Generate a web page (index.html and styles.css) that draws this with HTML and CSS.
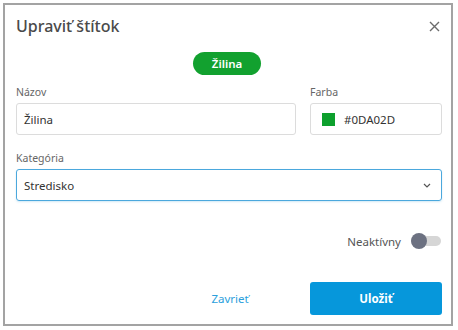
FILE: index.html
```html
<!DOCTYPE html>
<html lang="sk">
<head>
  <meta charset="UTF-8" />
  <title>Upraviť štítok</title>
  <link rel="stylesheet" href="styles.css">
</head>
<body>
  <div class="dialog">
    <div class="dialog-head">
      <h1>Upraviť štítok</h1>
      <button class="close" aria-label="Zavrieť">
        <svg width="11" height="11" viewBox="0 0 11 11"><path d="M1 1 L10 10 M10 1 L1 10" stroke="#6b6b6b" stroke-width="1.4" fill="none"/></svg>
      </button>
    </div>

    <div class="preview">
      <span class="tag">Žilina</span>
    </div>

    <div class="row">
      <div class="field">
        <label>Názov</label>
        <div class="input">Žilina</div>
      </div>
      <div class="field">
        <label>Farba</label>
        <div class="input"><span class="swatch"></span>#0DA02D</div>
      </div>
    </div>

    <div class="field field-cat">
      <label>Kategória</label>
      <div class="input select">
        Stredisko
        <svg width="8" height="5" viewBox="0 0 8 5"><path d="M1 1 L4 4 L7 1" stroke="#555" stroke-width="1.2" fill="none"/></svg>
      </div>
    </div>

    <div class="toggle-row">
      <span>Neaktívny</span>
      <span class="toggle"><span class="knob"></span></span>
    </div>

    <div class="actions">
      <button class="link">Zavrieť</button>
      <button class="primary">Uložiť</button>
    </div>
  </div>
</body>
</html>
```

FILE: styles.css
```css
body {
  margin: 0;
  background: #fff;
  font-family: "Noto Sans", "Open Sans", sans-serif;
  color: #333;
}

.dialog {
  margin: 3px;
  width: 426px;
  height: 319px;
  border: 2px solid #a3a3a3;
  padding: 0 9px 0 11px;
  box-sizing: content-box;
  display: flex;
  flex-direction: column;
}

.dialog-head {
  display: flex;
  justify-content: space-between;
  align-items: center;
  padding-top: 9px;
  height: 24px;
}

h1 {
  margin: 0;
  font-size: 16px;
  font-weight: 500;
  color: #4a4a4a;
  line-height: 24px;
}

.close {
  border: none;
  background: none;
  padding: 0;
  margin-right: 2px;
  width: 11px;
  height: 11px;
  display: flex;
}

.preview {
  display: flex;
  justify-content: center;
  margin-top: 14px;
}

.tag {
  background: #12a12f;
  color: #fff;
  font-size: 11.5px;
  font-weight: 600;
  height: 23px;
  line-height: 23px;
  width: 68px;
  margin-left: -4px;
  text-align: center;
  border-radius: 12px;
}

.row {
  display: grid;
  grid-template-columns: 1fr 132px;
  gap: 14px;
  margin-top: 10px;
}

.field label {
  display: block;
  font-size: 10.5px;
  line-height: 14px;
  color: #666;
  margin-bottom: 4px;
}

.input {
  height: 32px;
  box-sizing: border-box;
  border: 1px solid #dcdcdc;
  border-radius: 3px;
  display: flex;
  align-items: center;
  padding: 0 7px;
  font-size: 11.5px;
  color: #333;
}

.swatch {
  width: 13px;
  height: 13px;
  background: #0da02d;
  margin: 0 9px 0 4px;
}

.field-cat {
  margin-top: 16px;
}

.select {
  border-color: #4ba8dd;
  justify-content: space-between;
  padding-right: 10px;
  box-shadow: 0 1px 2px rgba(75, 168, 221, 0.25);
}

.toggle-row {
  display: flex;
  justify-content: flex-end;
  align-items: center;
  gap: 10px;
  margin-top: 32px;
  height: 16px;
  font-size: 11.5px;
  color: #555;
}

.toggle {
  position: relative;
  width: 30px;
  height: 10px;
  background: #d6d6d6;
  border-radius: 5px;
  margin-right: 1px;
}

.knob {
  position: absolute;
  left: 0;
  top: -3px;
  width: 16px;
  height: 16px;
  border-radius: 50%;
  background: #6c7181;
}

.actions {
  display: grid;
  grid-template-columns: 132px 132px;
  justify-content: end;
  gap: 14px;
  margin-top: 33px;
}

.actions button {
  height: 33px;
  border: none;
  border-radius: 3px;
  font-family: inherit;
  font-size: 11.5px;
  cursor: pointer;
}

.link {
  background: none;
  color: #2ba0dc;
}

.primary {
  background: #0697db;
  color: #fff;
  font-weight: 700;
}
```
